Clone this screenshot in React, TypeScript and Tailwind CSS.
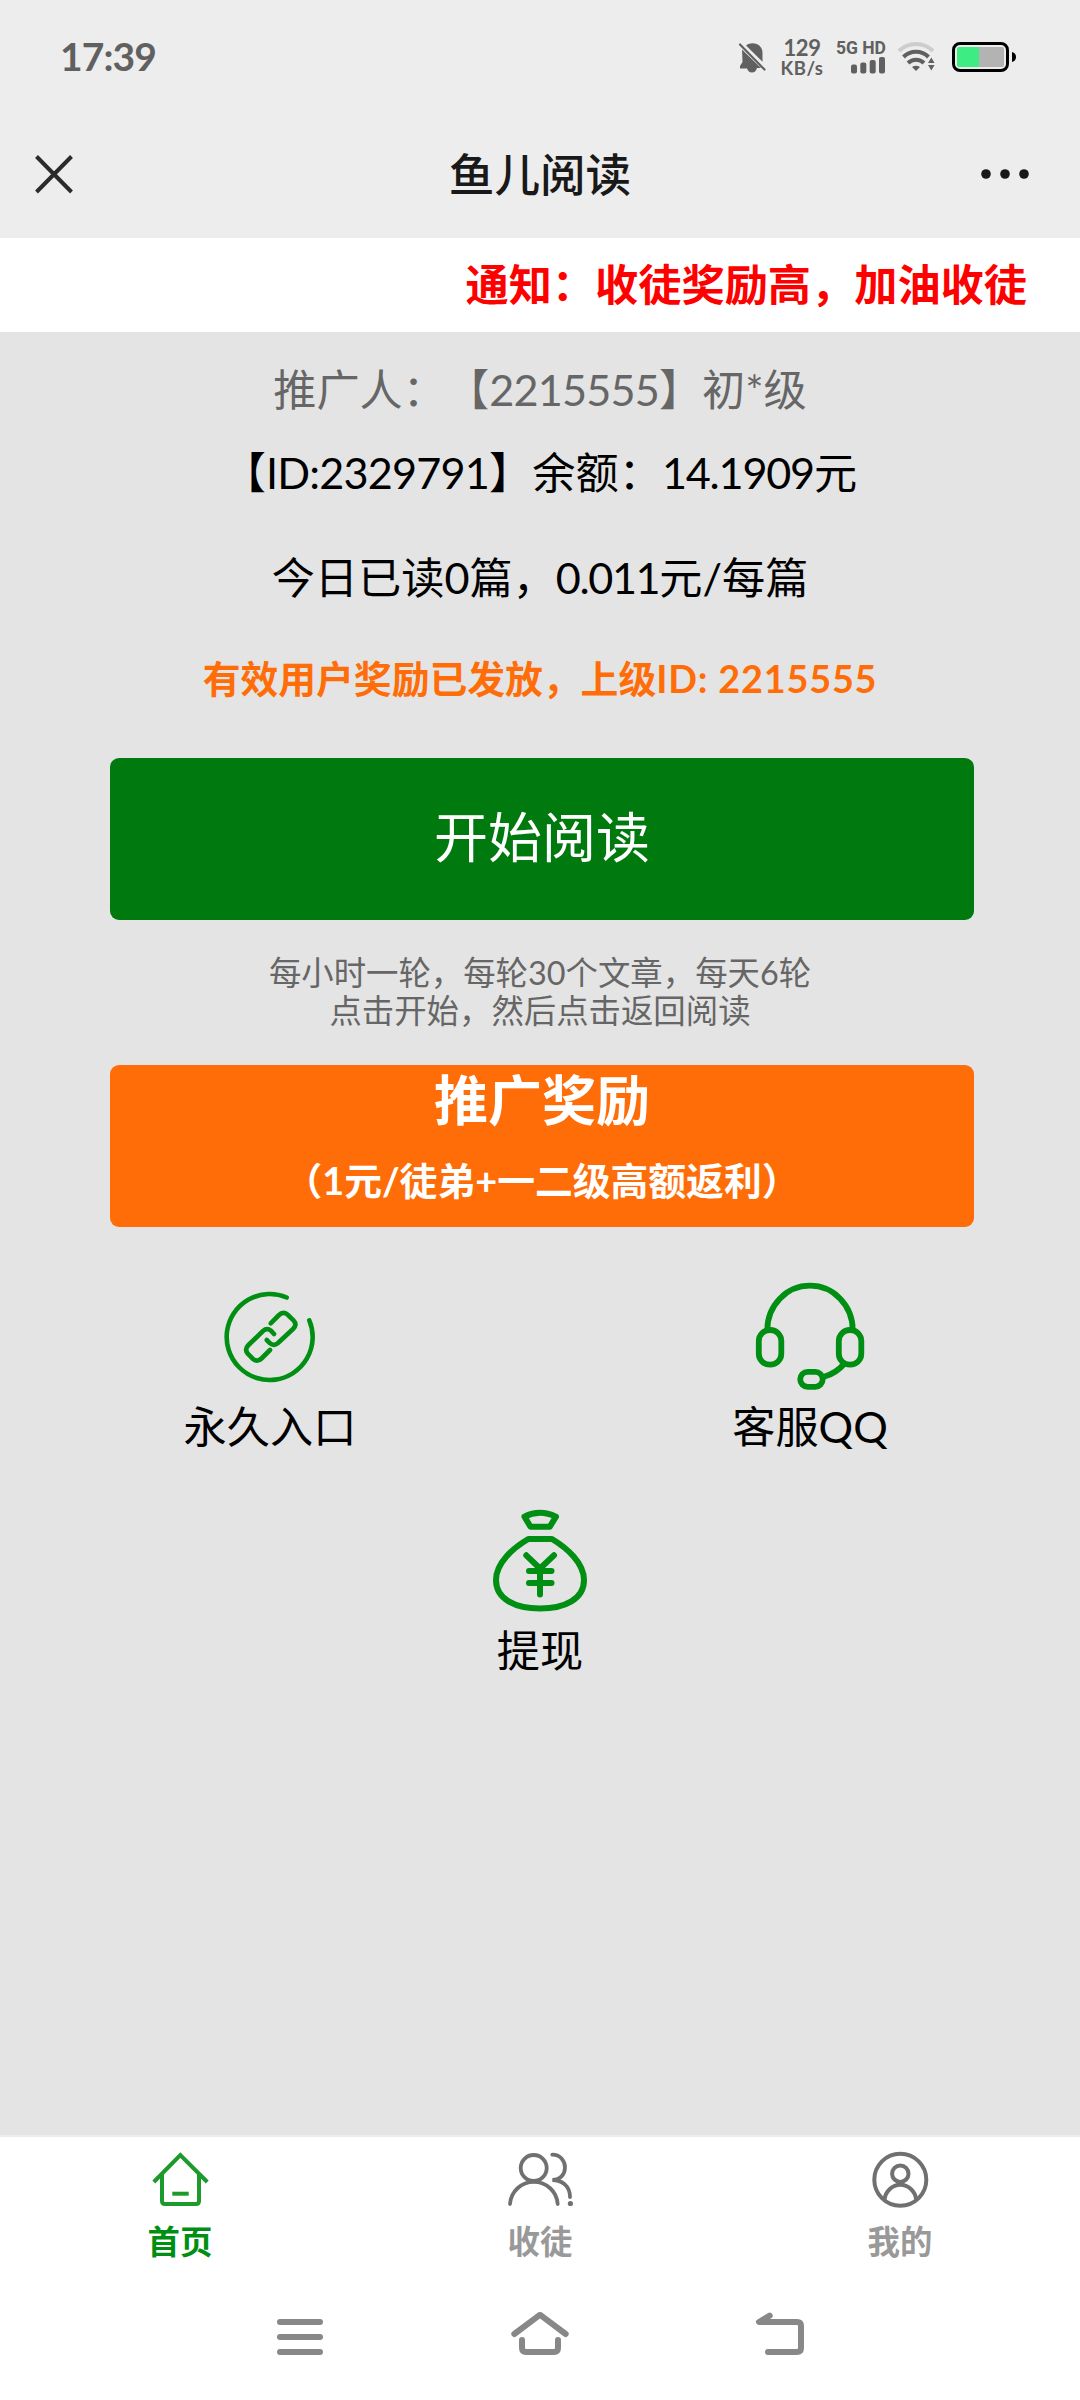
import type { ReactNode } from "react";

const GREEN = "#008f13";

function StatusBar() {
  return (
    <div className="flex h-[113px] items-center pr-[63px] pl-[60px] text-[#606060]">
      <span className="text-[39px] leading-none font-bold tracking-[-0.9px]">17:39</span>

      <div className="ml-auto flex items-center">
        <svg width="30" height="32" viewBox="0 0 30 32" fill="currentColor">
          <path d="M9 4.500C11 3 13 2.300 15.500 2.300C21.500 2.300 25.500 6.500 25.500 12V20.800Z" />
          <path d="M5 8.500L24 27H20C19 30 17.500 31.500 15 31.500C12.500 31.500 11 30 10 27.500H3V25L5.500 21Z" />
          <path d="M3 3.500L27.500 28.500" stroke="currentColor" strokeWidth="2.200" strokeLinecap="round" />
        </svg>

        <div className="ml-[12px] flex w-[46px] flex-col items-center">
          <span className="text-[22px] leading-[23px] font-bold tracking-[-0.5px]">129</span>
          <span className="text-[18.5px] leading-[19px] font-bold tracking-[0.5px] whitespace-nowrap">KB/s</span>
        </div>

        <div className="ml-[12px] flex w-[49px] flex-col items-end">
          <span className="font-['Roboto',sans-serif] text-[17.5px] leading-[16px] font-bold whitespace-nowrap">5G HD</span>
          <svg width="36" height="18" viewBox="0 0 36 18" fill="currentColor">
            <rect x="1" y="8.500" width="6" height="9" rx="2" />
            <rect x="10.300" y="6.500" width="6" height="11" rx="2" />
            <rect x="19.700" y="4" width="6" height="13.500" rx="2" />
            <rect x="29" y="1" width="6" height="16.500" rx="2" />
          </svg>
        </div>

        <svg className="ml-[9px]" width="44" height="36" viewBox="0 0 44 36" fill="none" stroke="currentColor">
          <path d="M4 12A24 24 0 0 1 38 12" stroke="#cdcdcd" strokeWidth="4" />
          <path d="M8.500 18A17.500 17.500 0 0 1 33.500 18" strokeWidth="4" />
          <path d="M13 24A11.500 11.500 0 0 1 29 24" strokeWidth="4" />
          <path d="M17 28Q21 25.500 25 28L21 32Z" fill="currentColor" stroke="none" />
          <path d="M33 24L36.300 18.500L39.600 24ZM33 26L36.300 31.500L39.600 26Z" fill="currentColor" stroke="none" />
        </svg>

        <svg className="ml-[12px]" width="66" height="32" viewBox="0 0 66 32">
          <rect x="2.500" y="2.500" width="54" height="27" rx="6.500" fill="#ececec" stroke="#000" strokeWidth="3" />
          <path d="M8 6H29V26H8Q6 26 6 24V8Q6 6 8 6Z" fill="#3ded84" />
          <path d="M28 6H51Q53 6 53 8V24Q53 26 51 26H28Z" fill="#b3b3b3" />
          <path d="M61 11Q65 12 65 16T61 21Z" fill="#000" />
        </svg>
      </div>
    </div>
  );
}

function TitleBar() {
  return (
    <div className="flex h-[125px] items-center justify-between pr-[48px] pb-[2px] pl-[34px] text-[#191919]">
      <svg width="40" height="40" viewBox="0 0 40 40" stroke="#2b2b2b" strokeWidth="4">
        <path d="M2.500 1.500L37.500 37M37.500 1.500L2.500 37" />
      </svg>
      <h1 className="ml-[26px] text-[45.6px] leading-none font-medium">鱼儿阅读</h1>
      <svg width="52" height="12" viewBox="0 0 52 12" fill="currentColor">
        <circle cx="6" cy="5" r="4.800" />
        <circle cx="25" cy="5" r="4.800" />
        <circle cx="44" cy="5" r="4.800" />
      </svg>
    </div>
  );
}

function LinkIcon() {
  return (
    <svg width="96" height="96" viewBox="0 0 96 96" fill="none" stroke={GREEN} strokeWidth="4.600" strokeLinecap="round">
      <path d="M64.700 8.500A43 43 0 1 0 87.300 31.300" />
      <path d="M48.700 34.300L56.500 26.500Q61 22 65.500 25.500L71.500 31.300Q75.500 35.500 71 40L56 54Q52 57.500 48 54.300L44.700 51" />
      <path d="M48 61L39.500 69.500Q35.500 73.500 31 70L26 65Q22 60.500 26.500 56L41 42Q45 38.500 49 41.700L52 45" />
    </svg>
  );
}

function HeadsetIcon() {
  return (
    <svg width="116" height="116" viewBox="0 0 116 116" fill="none" stroke={GREEN} strokeWidth="5.800">
      <path d="M15.300 51A42.700 44.300 0 0 1 100.700 51" />
      <rect x="6.800" y="51" width="22.500" height="34.700" rx="11" />
      <rect x="86.800" y="51" width="22.500" height="34.700" rx="11" />
      <rect x="48.200" y="92.800" width="22.500" height="15" rx="7.500" />
      <path d="M72 97.700Q84 94.500 92.500 84.500" />
    </svg>
  );
}

function MoneyBagIcon() {
  return (
    <svg width="100" height="110" viewBox="0 1 100 110" fill="none" stroke={GREEN} strokeWidth="6" strokeLinecap="round" strokeLinejoin="round">
      <path d="M34.500 11.700Q49.500 4 66 11.700L59.700 21.800H40.500Z" />
      <path d="M38.300 34H62C77 43 94 58 94 75C94 94 75 103.500 50 103.500S6 94 6 75C6 58 23 43 38.300 34Z" />
      <path d="M36.300 50.300L50 63.500L64 50.300M39 66H61.500M39 78H61.500M50 63.500V89.500" />
    </svg>
  );
}

function Entry({ icon, label }: { icon: ReactNode; label: string }) {
  return (
    <div className="flex flex-1 flex-col items-center">
      <div className="flex h-[116px] items-center">{icon}</div>
      <span className="mt-[3px] text-[43.2px] leading-[56px] text-black">{label}</span>
    </div>
  );
}

const TABS = [
  {
    label: "首页",
    active: true,
    icon: (
      <svg width="60" height="60" viewBox="0 0 60 60" fill="none" stroke="#1c9a2c" strokeWidth="4">
        <path d="M3.800 32L30.300 5L57.300 32" />
        <path d="M12 24V51Q12 54 15 54H46Q49 54 49 51V24" />
        <path d="M22.300 43.700H38.700" />
      </svg>
    ),
  },
  {
    label: "收徒",
    active: false,
    icon: (
      <svg width="70" height="60" viewBox="0 0 70 60" fill="none" stroke="#707070" strokeWidth="3.800" strokeLinecap="round">
        <circle cx="28.700" cy="18" r="13" />
        <path d="M5 54A23.900 23.700 0 0 1 52.700 54" />
        <path d="M47.300 4.700C55 4.700 60 10.500 60 17.500S55 30 47.300 30C57 30 65 36 65 47" />
        <circle cx="65.400" cy="53.500" r="2.600" fill="#707070" stroke="none" />
      </svg>
    ),
  },
  {
    label: "我的",
    active: false,
    icon: (
      <svg width="60" height="60" viewBox="0 0 60 60" fill="none" stroke="#707070" strokeWidth="4">
        <circle cx="30.300" cy="29.700" r="26" />
        <circle cx="30.300" cy="23.700" r="8.200" />
        <path d="M14.500 49.500A16 17 0 0 1 46.200 49.500" />
      </svg>
    ),
  },
];

function TabBar() {
  return (
    <nav className="flex h-[145px] border-t-2 border-[#ededed] bg-white">
      {TABS.map((tab) => (
        <div key={tab.label} className="flex flex-1 flex-col items-center pt-[13px]">
          {tab.icon}
          <span
            className={[
              "mt-[9px] text-[32.4px] leading-[46px] font-bold",
              tab.active ? "text-[#008f13]" : "text-[#999]",
            ].join(" ")}
          >
            {tab.label}
          </span>
        </div>
      ))}
    </nav>
  );
}

function SystemNav() {
  return (
    <div className="flex h-[120px] justify-center gap-[180px] bg-white pt-[25px]">
      <svg width="60" height="60" viewBox="0 0 60 60" fill="none" stroke="#888" strokeWidth="6" strokeLinecap="round">
        <path d="M10 17H50M10 32H50M10 47H50" />
      </svg>
      <svg width="60" height="60" viewBox="0 0 60 60" fill="none" stroke="#888" strokeWidth="6" strokeLinecap="round" strokeLinejoin="round">
        <path d="M4.300 29L28.500 10.800Q30 9.600 31.500 10.800L55.700 29" />
        <path d="M12 35V43Q12 47 16 47H44Q48 47 48 43V35" />
      </svg>
      <svg width="60" height="60" viewBox="0 0 60 60" fill="none" stroke="#888" strokeWidth="6" strokeLinecap="round" strokeLinejoin="round">
        <path d="M19.700 10.700L9 17H47Q51 17 51 21V43Q51 47 47 47H18" />
      </svg>
    </div>
  );
}

export default function App() {
  return (
    <div className="flex h-[2400px] w-[1080px] flex-col overflow-hidden bg-[#e4e4e4] font-['Lato','Noto_Sans_CJK_SC',sans-serif] [text-spacing-trim:space-all]">
      <header className="bg-[#ededed]">
        <StatusBar />
        <TitleBar />
      </header>

      {/* 滚动通知 */}
      <div className="flex h-[94px] items-center justify-end bg-white pr-[53px]">
        <span className="text-[43.2px] leading-none font-bold whitespace-nowrap text-[#f00]">
          通知：收徒奖励高，加油收徒
        </span>
      </div>

      <main className="flex flex-1 flex-col items-center text-[43.2px] leading-[60px] text-black">
        <p className="mt-[27px] text-[#666]">
          推广人：【<span className="tracking-[-0.8px]">2215555</span>】初*级
        </p>
        <p className="mt-[23px]">
          【<span className="tracking-[-0.8px]">ID:2329791</span>】余额：
          <span className="tracking-[-1.2px]">14.1909</span>元
        </p>
        <p className="mt-[45px]">
          今日已读0篇，<span className="tracking-[-1.4px]">0.011</span>元/每篇
        </p>
        <p className="mt-[42px] text-[37.8px] font-bold text-[#ff6d09]">
          有效用户奖励已发放，上级<span className="tracking-[0.8px]">ID: 2215555</span>
        </p>

        <button className="mt-[49px] ml-[4px] h-[162px] w-[864px] rounded-[9px] bg-[#007a0f] pb-[2px] text-[54px] text-white">
          开始阅读
        </button>

        <p className="mt-[34px] text-center text-[32.4px] leading-[38px] text-[#666]">
          每小时一轮，每轮30个文章，每天6轮
          <br />
          点击开始，然后点击返回阅读
        </p>

        <button className="mt-[35px] ml-[4px] flex h-[162px] w-[864px] flex-col items-center rounded-[9px] bg-[#ff6d09] font-bold text-white">
          <span className="text-[54px] leading-[72px]">推广奖励</span>
          <span className="mt-[16px] text-[37.8px] leading-[56px]">（1元/徒弟+一二级高额返利）</span>
        </button>

        {/* 功能入口 */}
        <div className="mt-[52px] flex w-full">
          <Entry icon={<LinkIcon />} label="永久入口" />
          <Entry icon={<HeadsetIcon />} label="客服QQ" />
        </div>
        <div className="mt-[49px] flex w-full">
          <Entry icon={<MoneyBagIcon />} label="提现" />
        </div>
      </main>

      <TabBar />
      <SystemNav />
    </div>
  );
}
